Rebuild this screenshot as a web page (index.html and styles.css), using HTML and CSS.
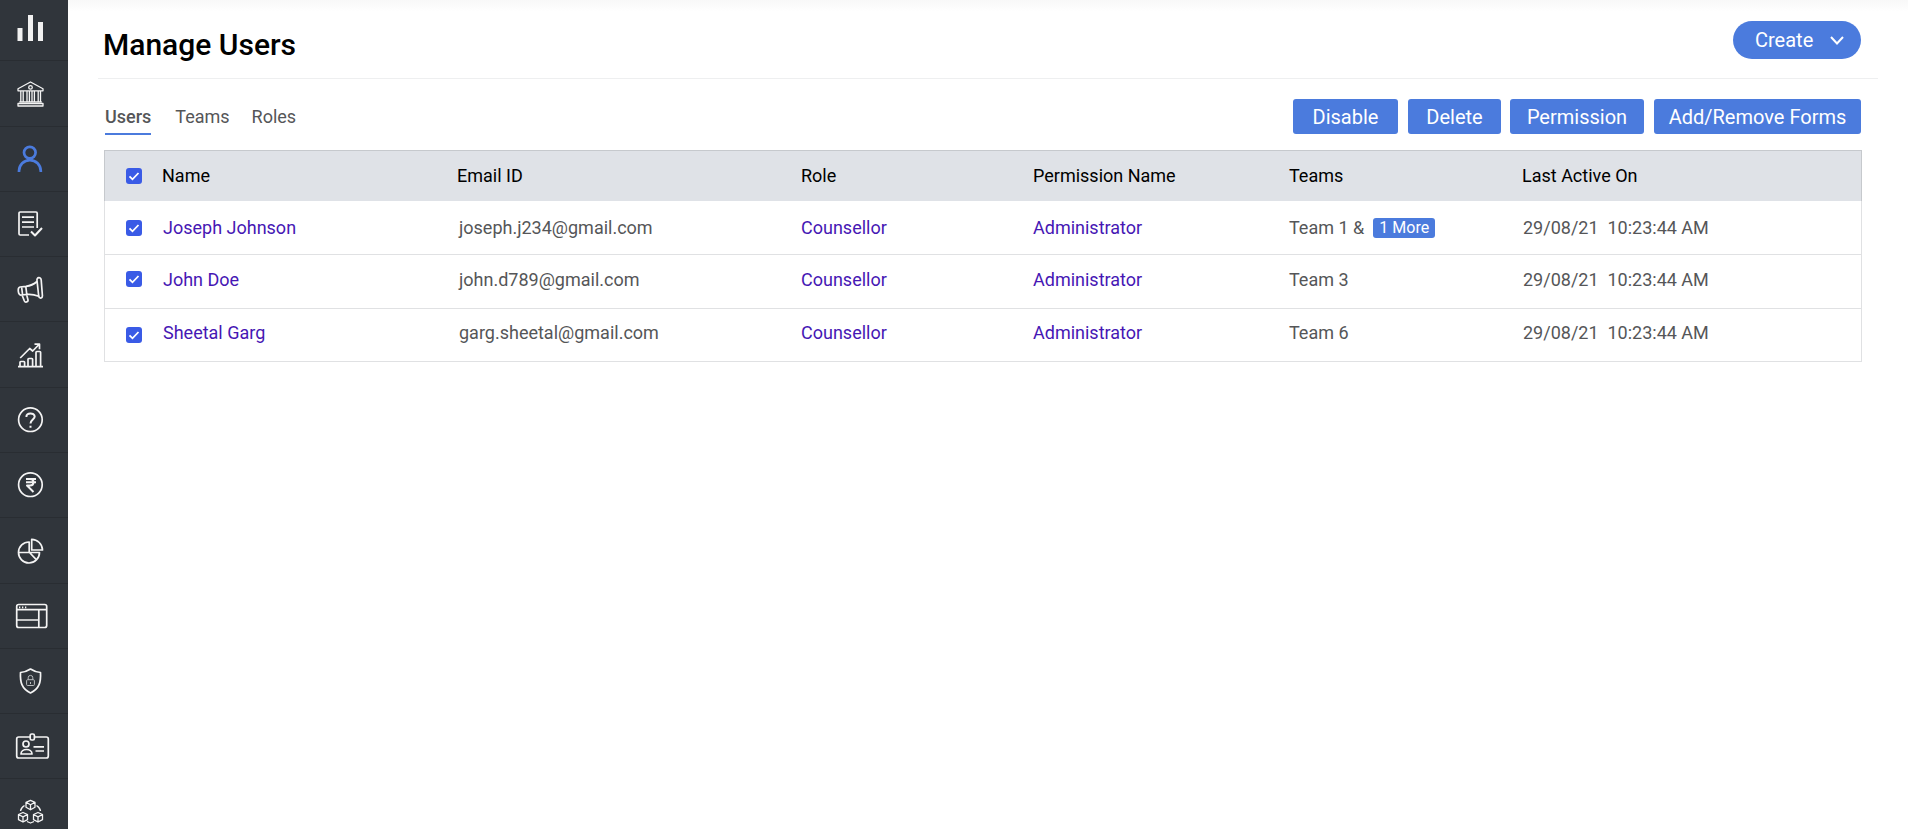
FILE: index.html
```html
<!DOCTYPE html>
<html lang="en">
<head>
<meta charset="utf-8">
<title>Manage Users</title>
<link rel="stylesheet" href="styles.css">
</head>
<body>
<div class="app">
  <nav class="sidebar">
    <a class="nav-item"><svg class="icon solid" viewBox="0 0 36 28"><path d="M3.500 14h5v13h-5zM14 1h5v26h-5zM24 8h5v19h-5z"/></svg></a>
    <a class="nav-item"><svg class="icon bank" viewBox="0 0 36 28"><path d="M4 10.800V8.700L16.500 2 29 8.700v2.100zM6.800 11v10.500M9.200 11v10.500M13 11v10.500M15.400 11v10.500M18 11v10.500M20.400 11v10.500M24.200 11v10.500M26.500 11v10.500M5.300 21.800h22.500M4 26v-2.500h25V26z"/><circle cx="16.500" cy="7.400" r="1.800"/></svg></a>
    <a class="nav-item active"><svg class="icon" viewBox="0 0 36 28"><circle cx="15.800" cy="7.600" r="5.800"/><path d="M5 27v-1a10.900 10.900 0 0 1 21.800 0v1"/></svg></a>
    <a class="nav-item"><svg class="icon" viewBox="0 0 36 28"><path d="M15 25H6.200Q5 25 5 23.800V3.200Q5 2 6.200 2H22Q23.200 2 23.200 3.200V18M8 7.200h12M8 12.200h12M8 17h12"/><path class="bold" d="M17 21.500l4 4 7-7.500"/></svg></a>
    <a class="nav-item"><svg class="icon" viewBox="0 0 36 28"><path d="M23 5.500C22.500 2 26.800 1.500 27.200 5l1.200 15.500c.2 3.200-3.200 3.400-3.700.5zM23 6.500C19 10 15 11 12 11.400l-6 .6C3.200 12.500 4 20.500 7 20l7-.6c4-.2 7.500.6 10.700 1.800M11.800 11.500l1 8M7.600 12l1 8M8 20l2.400 6c.8 1.800 4 1 3.600-1L12.600 19.600"/></svg></a>
    <a class="nav-item"><svg class="icon" viewBox="0 0 36 28"><path d="M4 25.700h25M6 25.500v-4.200q0-.8.800-.8h3q.8 0 .8.800v4.200M14 25.500v-7.200q0-.8.800-.8h3q.8 0 .8.800v7.200M22 25.500V11.300q0-.8.800-.8h3q.8 0 .8.800v14.200M6.200 17L15.700 7.500l3 2.500L25 3.500M20.500 3.200h5v5"/></svg></a>
    <a class="nav-item"><svg class="icon" viewBox="0 0 36 28"><circle cx="16.400" cy="13.700" r="11.800"/><path class="bold" d="M12.400 11C12 6.300 20.600 6.200 20.700 10.600 20.700 13.500 16.500 13.800 16.500 17.600M16.500 19.700v2"/></svg></a>
    <a class="nav-item"><svg class="icon" viewBox="0 0 36 28"><circle cx="16.400" cy="13.700" r="11.800"/><path class="bold" d="M12 8h10M12 11.200h10M12.200 8H16c4.700 0 4.700 6.500 0 6.500h-3L19.500 21"/></svg></a>
    <a class="nav-item"><svg class="icon" viewBox="0 0 36 28"><path d="M17.700 2.300A11 11 0 0 1 28.500 13H17.700zM15.200 5A10.500 10.500 0 1 0 25.500 15.500H15.200zM4.500 15.500h11l6.800 7.200"/></svg></a>
    <a class="nav-item"><svg class="icon" viewBox="0 0 36 28"><rect x="2.700" y="2.500" width="30" height="23" rx="2"/><path d="M2.700 7.700h30M24.800 7.700v17.800M2.700 18h22M5 5.300h1.300M8 5.300h1.300M11 5.300h1.300"/></svg></a>
    <a class="nav-item"><svg class="icon" viewBox="0 0 36 28"><path d="M16.500 2Q21 5 26.500 5.500C27 15 25.500 21.500 16.500 26 7.500 21.500 6 15 6.500 5.500 12 5 16.500 2 16.500 2z"/><path class="thin" d="M14.200 12.700v-2a2.300 2.300 0 0 1 4.600 0v2M16.500 15v2M13.600 12.700h5.800q1 0 1 1v3.800q0 1-1 1h-5.800q-1 0-1-1v-3.800q0-1 1-1z"/></svg></a>
    <a class="nav-item"><svg class="icon" viewBox="0 0 36 28"><path d="M16 5H4.700q-2 0-2 2V24q0 2 2 2h27.600q2 0 2-2V7q0-2-2-2H20.500"/><rect x="16.200" y="2" width="4.200" height="6" rx="1.500"/><circle cx="12" cy="12" r="3"/><path d="M7 22c0-6 11-6 11 0zM19.500 14.800H30M21.500 19H30"/></svg></a>
    <a class="nav-item"><svg class="icon" viewBox="0 0 36 28"><path class="fine" d="M16.500 2.300l4.500 2v5l-4.500 2.500L12 9.300v-5zM12 4.300l4.500 2.400L21 4.300M16.500 6.700v5M9 14.500l4.500 2v5.200L9 24l-4.500-2.300v-5.200zM4.500 16.500L9 18.800l4.500-2.300M9 18.800v5M24 14.500l4.500 2v5.200L24 24l-4.500-2.300v-5.200zM19.500 16.500l4.500 2.300 4.500-2.300M24 18.800v5M10.500 7.500Q6.800 10 6.500 13M22.500 7.500q3.700 2.500 4 5.500M13 23.500l3.500 1.500 3.500-1.500"/></svg></a>
  </nav>

  <main class="content">
    <header class="page-head">
      <h1>Manage Users</h1>
      <button class="create"><span>Create</span><svg class="chevron" viewBox="0 0 14 9"><path d="M1 1l6 6.500L13 1"/></svg></button>
    </header>

    <div class="toolbar">
      <div class="tabs">
        <a class="tab current">Users</a>
        <a class="tab">Teams</a>
        <a class="tab">Roles</a>
      </div>
      <div class="actions">
        <button class="btn disable">Disable</button>
        <button class="btn delete">Delete</button>
        <button class="btn permission">Permission</button>
        <button class="btn forms">Add/Remove Forms</button>
      </div>
    </div>

    <section class="table">
      <div class="row head">
        <span class="check"><svg viewBox="0 0 16 16"><path d="M3.500 8.300l3 3L12.500 5"/></svg></span>
        <span>Name</span><span>Email ID</span><span>Role</span><span>Permission Name</span><span>Teams</span><span>Last Active On</span>
      </div>
      <div class="row first">
        <span class="check"><svg viewBox="0 0 16 16"><path d="M3.500 8.300l3 3L12.500 5"/></svg></span>
        <a>Joseph Johnson</a><span class="email">joseph.j234@gmail.com</span><a>Counsellor</a><a>Administrator</a><span class="teams">Team 1 &amp; <b class="badge">1 More</b></span><span class="date">29/08/21&nbsp; 10:23:44 AM</span>
      </div>
      <div class="row second">
        <span class="check"><svg viewBox="0 0 16 16"><path d="M3.500 8.300l3 3L12.500 5"/></svg></span>
        <a>John Doe</a><span class="email">john.d789@gmail.com</span><a>Counsellor</a><a>Administrator</a><span>Team 3</span><span class="date">29/08/21&nbsp; 10:23:44 AM</span>
      </div>
      <div class="row third">
        <span class="check"><svg viewBox="0 0 16 16"><path d="M3.500 8.300l3 3L12.500 5"/></svg></span>
        <a>Sheetal Garg</a><span class="email">garg.sheetal@gmail.com</span><a>Counsellor</a><a>Administrator</a><span>Team 6</span><span class="date">29/08/21&nbsp; 10:23:44 AM</span>
      </div>
    </section>
  </main>
</div>
</body>
</html>
```
FILE: styles.css
```css
* { box-sizing: border-box; }
body { margin: 0; background: #fff; font-family: Roboto, "Liberation Sans", sans-serif; font-size: 18px; color: #555658; }
.app { display: flex; height: 829px; overflow: hidden; }

.sidebar { width: 68px; flex: none; background: #30353b; display: grid; grid-template-rows: 61px 66px 65px 65px 65px 66px 65px 65px 66px 65px 65px 65px 66px; }
.nav-item { display: flex; align-items: center; padding-left: 14px; border-bottom: 1px solid #292d32; }
.nav-item:first-child { padding-bottom: 4px; }
.icon { width: 36px; height: 28px; fill: none; stroke: #f4f4f4; stroke-width: 1.7; stroke-linejoin: round; }
.icon.solid { fill: #f1f1f1; stroke: none; }
.icon.bank { stroke-width: 1.3; }
.icon .bold { stroke-width: 2; }
.icon .thin { stroke: #b9bcbe; stroke-width: 1; }
.icon .fine { stroke-width: 1.3; }
.active .icon { stroke: #4b7bdd; stroke-width: 2.7; }

.content { flex: 1; min-width: 0; padding-left: 30px; background: linear-gradient(#f8f8f8, #fff 12px); }
.page-head { display: flex; justify-content: space-between; align-items: flex-start; width: 1780px; height: 79px; padding: 21px 17px 0 5px; border-bottom: 1px solid #eeeff0; }
h1 { margin: 6px 0 0; font-size: 30px; line-height: 36px; font-weight: 500; color: #000; }
button { border: 0; font-family: inherit; color: #fff; background: #4b7bdd; padding: 0; }
.create { display: flex; align-items: center; gap: 17px; width: 128px; height: 38px; padding-left: 22px; border-radius: 19px; font-size: 20px; }
.chevron { width: 14px; height: 9px; fill: none; stroke: #fff; stroke-width: 2; }

.toolbar { display: flex; justify-content: space-between; width: 1763px; height: 71px; padding: 20px 0 0 7px; }
.tabs { display: flex; gap: 22px; padding-top: 7px; height: 36px; }
.tab { line-height: 22px; }
.tab.current { margin-right: 2px; font-weight: 500; border-bottom: 2px solid #4b7bdd; }
.actions { display: flex; }
.btn { height: 35px; border-radius: 3px; font-size: 20px; }
.disable { width: 105px; margin-right: 10px; }
.delete { width: 93px; margin-right: 9px; }
.permission { width: 134px; margin-right: 10px; }
.forms { width: 207px; }

.table { width: 1758px; margin-left: 6px; border: 1px solid #e0e1e3; border-top: 0; }
.row { display: grid; grid-template-columns: 58px 295px 343px 232px 256px 234px 1fr; height: 54px; line-height: 22px; border-bottom: 1px solid #e0e1e3; white-space: nowrap; }
.row.head { grid-template-columns: 57px 295px 344px 232px 256px 233px 1fr; height: 51px; padding-top: 14px; margin: 0 -1px; background: #dfe2e7; border: 1px solid #c6c9cd; border-bottom: 0; color: #000; }
.row.first { padding-top: 16px; }
.row.second { padding-top: 14px; }
.row.third { height: 52px; padding-top: 13px; border-bottom: 0; }
.row a { color: #4617b4; }
.check { width: 16px; height: 16px; margin: 3px 0 0 21px; border-radius: 3px; background: #3a5be6; }
.second .check { margin-top: 2px; }
.third .check { margin-top: 5px; }
.check svg { display: block; fill: none; stroke: #fff; stroke-width: 1.8; }
.email { padding-left: 1px; }
.teams { display: flex; align-items: center; gap: 9px; height: 22px; }
.badge { width: 62px; height: 20px; border-radius: 3px; background: #4b7bdd; color: #fff; font-size: 16px; line-height: 20px; font-weight: 400; text-align: center; }
```
